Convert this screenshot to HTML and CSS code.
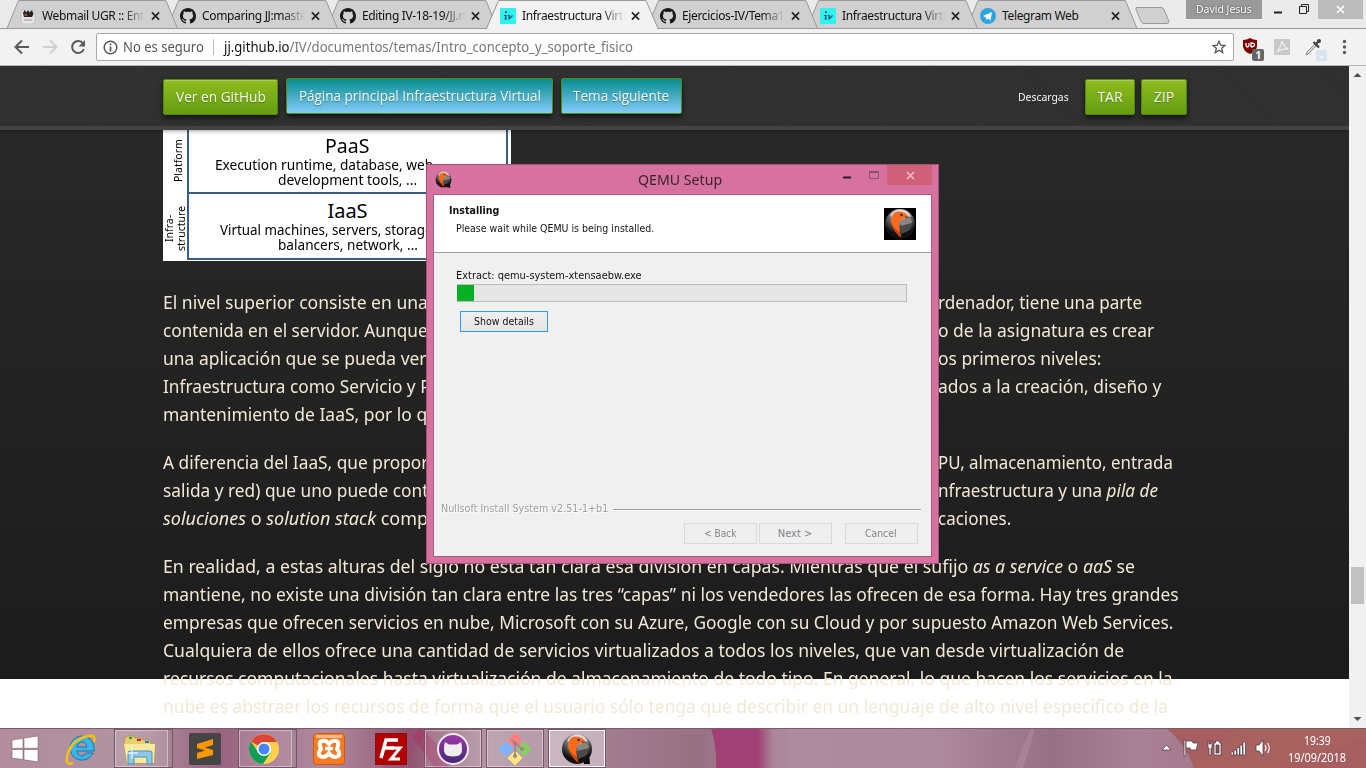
FILE: index.html
```html
<!DOCTYPE html>
<html lang="es">
<head>
<meta charset="utf-8">
<title>Infraestructura Virtual</title>
<link rel="stylesheet" href="styles.css">
</head>
<body>
<svg width="0" height="0" class="defs">
  <defs>
    <symbol id="octo" viewBox="0 0 16 16"><path d="M8 0C3.58 0 0 3.58 0 8c0 3.54 2.29 6.53 5.47 7.59.4.07.55-.17.55-.38 0-.19-.01-.82-.01-1.49-2.01.37-2.53-.49-2.69-.94-.09-.23-.48-.94-.82-1.13-.28-.15-.68-.52-.01-.53.63-.01 1.08.58 1.23.82.72 1.21 1.87.87 2.33.66.07-.52.28-.87.51-1.07-1.78-.2-3.64-.89-3.64-3.95 0-.87.31-1.59.82-2.15-.08-.2-.36-1.02.08-2.12 0 0 .67-.21 2.2.82.64-.18 1.32-.27 2-.27s1.36.09 2 .27c1.53-1.04 2.2-.82 2.2-.82.44 1.1.16 1.92.08 2.12.51.56.82 1.27.82 2.15 0 3.07-1.87 3.75-3.65 3.95.29.25.54.73.54 1.48 0 1.07-.01 1.93-.01 2.2 0 .21.15.46.55.38A8.01 8.01 0 0 0 16 8c0-4.42-3.58-8-8-8z" fill="#191717"/></symbol>
    <symbol id="iv" viewBox="0 0 16 16"><path d="M0 0h16v16H0z" fill="#2ff3f3"/><circle cx="6" cy="4.200" r="1" fill="#245"/><path d="M3.800 7.500H6L5.300 11l1.500-.3M7.800 7.300l1.200.2.200 3.300 3.300-3.300" fill="none" stroke="#245" stroke-width="1.200"/></symbol>
    <symbol id="close" viewBox="0 0 10 10"><path d="M1 1l8 8M9 1l-8 8" stroke="#222" stroke-width="1.800"/></symbol>
    <radialGradient id="ball" cx=".5" cy=".15" r=".8"><stop offset="0" stop-color="#ddd"/><stop offset=".5" stop-color="#666"/><stop offset=".85" stop-color="#111"/></radialGradient>
    <symbol id="qemu" viewBox="0 0 32 32"><path d="M22 21h6l1 10h-6z" fill="#050505"/><circle cx="16" cy="16" r="15" fill="url(#ball)"/><path d="M6 8Q9 2 16 1.500q8 0 11 7L20 9l-6 2z" fill="#e2e0de" opacity=".85"/><path d="M17 12l8-2.500q3 2 3 5.500l-11 4z" fill="#8b8580"/><path d="M16 18l12-3q0 5-4 8l-7 3z" fill="#4a4a4a"/><path d="M7 13Q7.500 4 14 3.500q5.500-.3 8 2.500l3 3-4 .5q-4 .5-5.500 4.500-1 4 .2 8l1.300 7.500Q8 22 7 13z" fill="#fb6a1b"/><path d="M8 16.500q3 9 9.500 13l-1-4.500Q12 22 8 16.500z" fill="#d24309"/><path d="M21 8l5 2-5-.3z" fill="#8a2f10"/><circle cx="17.500" cy="7" r="1.200" fill="#222"/></symbol>
  </defs>
</svg>

<header class="chrome">
  <div class="strip">
    <svg class="tabshapes" width="1366" height="29" viewBox="0 0 1366 29">
      <path d="M0 28.500h1366" stroke="#999"/>
      <g fill="#d0d0d0" stroke="#999">
        <path d="M966.500 28.500L978 .5h147.500l11.500 28z"/>
        <path d="M807 28.500L818.500.5H966l11.500 28z"/>
        <path d="M647 28.500L658.500.5H806l11.500 28z"/>
        <path d="M327 28.500L338.500.5H486l11.500 28z"/>
        <path d="M167 28.500L178.500.5H326l11.500 28z"/>
        <path d="M7 28.500L18.500.5H166l11.500 28z"/>
        <path d="M1137 7.500h24q2 0 3 2l5 12q0 2-2 2h-23q-2 0-3-2l-5-12q-.5-2 1-2z"/>
      </g>
      <path d="M486.500 29L498.500.5H646l12 28.500z" fill="#f2f2f2"/>
      <path d="M486.500 28.500L498.500.5H646l12 28" fill="none" stroke="#999"/>
    </svg>
    <div class="tab"><svg class="fav" viewBox="0 0 16 16"><path d="M1 5l2-4 3 3h4l3-3 2 4v9l-3 2H3l-2-2z" fill="#e8e4e2" stroke="#aaa" stroke-width=".5"/><path d="M3 5l1.500-3 2 2.500L8 2l1.500 2.500L12 2l1.500 4L12 9H4z" fill="#222"/><path d="M4 6h3v2H5z" fill="#b54c2a"/><path d="M4 12h8" stroke="#999"/></svg><span class="title">Webmail UGR :: Entrada</span><svg class="x"><use href="#close"/></svg></div>
    <div class="tab"><svg class="fav"><use href="#octo"/></svg><span class="title">Comparing JJ:master</span><svg class="x"><use href="#close"/></svg></div>
    <div class="tab"><svg class="fav"><use href="#octo"/></svg><span class="title">Editing IV-18-19/JJ.md</span><svg class="x"><use href="#close"/></svg></div>
    <div class="tab"><svg class="fav"><use href="#iv"/></svg><span class="title">Infraestructura Virtual</span><svg class="x"><use href="#close"/></svg></div>
    <div class="tab"><svg class="fav"><use href="#octo"/></svg><span class="title">Ejercicios-IV/Tema1</span><svg class="x"><use href="#close"/></svg></div>
    <div class="tab"><svg class="fav"><use href="#iv"/></svg><span class="title">Infraestructura Virtual</span><svg class="x"><use href="#close"/></svg></div>
    <div class="tab"><svg class="fav" viewBox="0 0 16 16"><circle cx="8" cy="8" r="8" fill="#2ca5e0"/><path d="M3 8l9-4-1.500 8.500L8 10.500 6.500 12 6 9.500z" fill="#fff"/></svg><span class="title full"><span data-w="77">Telegram Web</span></span><svg class="x"><use href="#close"/></svg></div>
    <div class="user"><span data-w="56">David Jesus</span></div>
    <svg class="winctl" width="104" height="19" viewBox="0 0 104 19"><path d="M56 0h45v19H56z" fill="#bcbcbc"/><path d="M12 12.500h8" stroke="#222" stroke-width="2"/><path d="M37.500 6.500h7v7h-7zM39.500 6V4.500h7v7H45" fill="none" stroke="#222"/><path d="M75 6l7 7M82 6l-7 7" stroke="#fff" stroke-width="1.600"/></svg>
  </div>
  <div class="toolbar">
    <svg width="96" height="36" viewBox="0 0 96 36" fill="none" stroke-width="2"><path d="M29 18H16M22 11.500L15.500 18l6.500 6.500" stroke="#5a5a5a"/><path d="M43 18h13M50 11.500l6.500 6.500-6.500 6.500" stroke="#d0d0d0"/><path d="M83 14.500a6 6 0 1 0 .8 5.500" stroke="#5a5a5a"/><path d="M85 11v6.500h-6.500z" fill="#5a5a5a"/></svg>
    <div class="omni">
      <svg width="15" height="15" viewBox="0 0 15 15"><circle cx="7.500" cy="7.500" r="6.300" fill="none" stroke="#555" stroke-width="1.500"/><path d="M7.500 6.500v5M7.500 3.500v1.700" stroke="#555" stroke-width="1.700"/></svg>
      <span class="sec"><span data-w="81">No es seguro</span></span>
      <span class="url"><span data-w="409">jj.github.io<span class="path">/IV/documentos/temas/Intro_concepto_y_soporte_fisico</span></span></span>
      <svg class="star" width="14" height="14" viewBox="0 0 14 14"><path d="M7 1.200l1.700 4 4.200.3-3.200 2.800 1 4.200L7 10.200l-3.700 2.300 1-4.200L1.100 5.500l4.200-.3z" fill="none" stroke="#555" stroke-width="1.300"/></svg>
    </div>
    <svg width="132" height="36" viewBox="0 0 132 36"><path d="M9 11q4 0 7-2 3 2 7 2v6q0 5-7 8-7-3-7-8z" fill="#800000"/><path d="M12 14v2q0 2 1.500 2t1.500-2v-2M17 18v-4q4 0 3.500 2t-3.500 2" fill="none" stroke="#fff" stroke-width="1.300"/><rect x="18" y="20" width="12" height="12" rx="2" fill="#666"/><text x="21.500" y="30" font-size="10" font-weight="700" fill="#fff" font-family="Noto Sans">1</text><path d="M40 10h16v16H40z" fill="#c8c8c8"/><path d="M43 23q4-5 5-11 1 5 6 8-6-1-11 3z" fill="none" stroke="#eee" stroke-width="1.300"/><path d="M82 17l-8 8-2 1 1-3 8-8z" fill="#ddd" stroke="#888"/><path d="M79.500 13l5.500 5.500M81.500 15.500l4-4" stroke="#444" stroke-width="2.400"/><circle cx="85" cy="12" r="2" fill="#444"/><rect x="82" y="21" width="11" height="11" rx="2" fill="#d7e5ee"/><path d="M86 28h3" stroke="#fff"/><g fill="#5a5a5a"><circle cx="110.500" cy="12.500" r="1.700"/><circle cx="110.500" cy="18" r="1.700"/><circle cx="110.500" cy="23.500" r="1.700"/></g></svg>
  </div>
</header>

<main class="view">
  <div class="page">
    <nav class="bar">
      <a class="btn"><span data-w="90">Ver en GitHub</span></a>
      <a class="btn blue b1"><span data-w="242">Página principal Infraestructura Virtual</span></a>
      <a class="btn blue b2"><span data-w="96">Tema siguiente</span></a>
      <span class="dl"><span data-w="51">Descargas</span></span>
      <a class="btn tar"><span data-w="25">TAR</span></a>
      <a class="btn zip"><span data-w="20">ZIP</span></a>
    </nav>
    <article class="content">
      <div class="diagram">
        <div class="side s1">Platform</div>
        <div class="cell c1"><h4><span data-w="45">PaaS</span></h4><p class="long"><span data-w="218">Execution runtime, database, web</span></p><p><span data-w="139">development tools, ...</span></p></div>
        <div class="side s2">Infra-<br>structure</div>
        <div class="cell c2"><h4><span data-w="40">IaaS</span></h4><p class="long"><span data-w="213">Virtual machines, servers, storage</span></p><p><span data-w="140">balancers, network, ...</span></p></div>
      </div>
      <div class="para">
        <div class="line"><span class="l"><span data-w="265">El nivel superior consiste en una</span></span><span data-w="204">rdenador, tiene una parte</span></div>
        <div class="line"><span class="l"><span data-w="265">contenida en el servidor. Aunque</span></span><span data-w="216">o de la asignatura es crear</span></div>
        <div class="line"><span class="l"><span data-w="264">una aplicación que se pueda ver</span></span><span data-w="163">os primeros niveles:</span></div>
        <div class="line"><span class="l"><span data-w="268">Infraestructura como Servicio y P</span></span><span data-w="223">ados a la creación, diseño y</span></div>
        <div class="line"><span class="l"><span data-w="264">mantenimiento de IaaS, por lo q</span></span></div>
      </div>
      <div class="para">
        <div class="line"><span class="l"><span data-w="265">A diferencia del IaaS, que propor</span></span><span data-w="235">PU, almacenamiento, entrada</span></div>
        <div class="line"><span class="l"><span data-w="265">salida y red) que uno puede cont</span></span><span data-w="220">nfraestructura y una <i>pila de</i></span></div>
        <div class="line"><span class="l"><span data-w="265"><i>soluciones</i> o <i>solution stack</i> comp</span></span><span data-w="73">caciones.</span></div>
      </div>
      <div class="para">
        <div class="line"><span data-w="972">En realidad, a estas alturas del siglo no está tan clara esa división en capas. Mientras que el sufijo <i>as a service</i> o <i>aaS</i> se</span></div>
        <div class="line"><span data-w="1016">mantiene, no existe una división tan clara entre las tres “capas” ni los vendedores las ofrecen de esa forma. Hay tres grandes</span></div>
        <div class="line"><span data-w="1010">empresas que ofrecen servicios en nube, Microsoft con su Azure, Google con su Cloud y por supuesto Amazon Web Services.</span></div>
        <div class="line"><span data-w="961">Cualquiera de ellos ofrece una cantidad de servicios virtualizados a todos los niveles, que van desde virtualización de</span></div>
        <div class="line"><span data-w="1010">recursos computacionales hasta virtualización de almacenamiento de todo tipo. En general, lo que hacen los servicios en la</span></div>
        <div class="line"><span data-w="1005">nube es abstraer los recursos de forma que el usuario sólo tenga que describir en un lenguaje de alto nivel específico de la</span></div>
      </div>
    </article>
  </div>
  <div class="scroll"><svg width="17" height="17"><path d="M4.500 11l4-4 4 4z" fill="#505050"/></svg><div class="thumb"></div><svg class="down" width="17" height="17"><path d="M4.500 6l4 4 4-4z" fill="#505050"/></svg></div>
</main>

<section class="dialog">
  <div class="dtitle"><svg width="17" height="17"><use href="#qemu"/></svg><span class="dname"><span data-w="84">QEMU Setup</span></span>
    <svg class="dctl" width="94" height="22" viewBox="0 0 94 22"><path d="M49 0h45v20H49z" fill="#cf6079"/><path d="M5 12.500h8" stroke="#222" stroke-width="2"/><path d="M31.500 6.500h9v7h-9z" fill="none" stroke="#8e5169"/><path d="M31 7h10" stroke="#8e5169" stroke-width="2"/><path d="M69 7l7 7M76 7l-7 7" stroke="#f0bdcb" stroke-width="1.600"/></svg>
  </div>
  <div class="dbody">
    <div class="dhead"><div><b><span data-w="50">Installing</span></b><p><span data-w="198">Please wait while QEMU is being installed.</span></p></div><div class="logo"><svg width="32" height="32"><use href="#qemu"/></svg></div></div>
    <div class="dmain">
      <span class="ext"><span data-w="186">Extract: qemu-system-xtensaebw.exe</span></span>
      <div class="prog"><div></div></div>
      <button class="show"><span data-w="60">Show details</span></button>
      <div class="nsis"><span data-w="167">Nullsoft Install System v2.51-1+b1</span><hr></div>
      <div class="btns"><button><span data-w="32">&lt; Back</span></button><button><span data-w="34">Next &gt;</span></button><button class="cancel"><span data-w="32">Cancel</span></button></div>
    </div>
  </div>
</section>

<footer class="task">
  <svg class="taskbg" width="1366" height="40" viewBox="0 0 1366 40" preserveAspectRatio="none">
    <defs><linearGradient id="tb"><stop offset="0" stop-color="#b38d9c"/><stop offset=".1" stop-color="#b093a0"/><stop offset=".16" stop-color="#98637f"/><stop offset=".24" stop-color="#af8ba0"/><stop offset=".3" stop-color="#925571"/><stop offset=".36" stop-color="#b499a8"/><stop offset=".45" stop-color="#a17c8e"/><stop offset=".51" stop-color="#987083"/><stop offset=".58" stop-color="#ae8b9f"/><stop offset=".69" stop-color="#ae899c"/><stop offset=".77" stop-color="#967083"/><stop offset=".83" stop-color="#a98195"/><stop offset=".86" stop-color="#a77c91"/></linearGradient>
    <linearGradient id="mg"><stop offset="0" stop-color="#a14075"/><stop offset=".75" stop-color="#a14075"/><stop offset="1" stop-color="#a14075" stop-opacity="0"/></linearGradient></defs>
    <path d="M0 0h1366v40H0z" fill="url(#tb)"/><path d="M382 40L408 0h20l-25 40z" fill="#9d4571" opacity=".4"/><path d="M420 0q20 15 30 40h-15L412 8z" fill="#a32763" opacity=".4"/>
    <path d="M711 0h62v40h-57q1-20-5-40z" fill="url(#mg)"/><path d="M1031 0q-9 20-16 40h8q7-20 12-40z" fill="#c09bad" opacity=".35"/><path d="M1166 0q20 16 28 40h172V0z" fill="#a65e60"/><path d="M1240 0l-50 40h90l86-30V0z" fill="#aa675e" opacity=".4"/><path d="M0 .5h1366" stroke="#7c596a"/>
  </svg>
  <div class="slot start"><svg width="28" height="28" viewBox="0 0 28 28"><path d="M1 5l11-1.700v10H1zM13 3.100L27 1v12.300H13zM1 14.500h11v10L1 23zM13 14.500h14V27l-14-2.200z" fill="#fff" stroke="#806070" stroke-width=".6"/></svg></div>
  <div class="slot"><svg width="32" height="32" viewBox="0 0 32 32"><path d="M28 20a12 12 0 1 1 1-6l.3 4H12q1 5 5 5 3 0 4-3z" fill="#3bb4ea" stroke="#1677a8"/><path d="M12 14h10q-1-5-5-5t-5 5z" fill="#b493a0" stroke="#1677a8"/><path d="M29 9q2-8-6-6Q8 6 3 20-1 33 8 30" fill="none" stroke="#f5bf19" stroke-width="2.600"/></svg></div>
  <div class="slot open multi"><svg width="34" height="32" viewBox="0 0 34 32"><path d="M2 5l2-2h6l2 2h6l2 2h6l2 2v3l4 1-1 17H4L1 10z" fill="#e9cf71" stroke="#b8963c"/><path d="M1 11h31l-1 19H4z" fill="#f7e99d"/><path d="M6 5h3" stroke="#1fa032" stroke-width="2"/><path d="M14 7h4" stroke="#d22" stroke-width="2"/><path d="M22 9h4" stroke="#27e" stroke-width="2"/><path d="M5 31V20q0-2 2-2h20q2 0 2 2v11h-5v-7H11v7z" fill="#8cc8e8" stroke="#4d93bb"/><path d="M9 14v12M3 20h12" stroke="#fff"/></svg></div>
  <div class="slot"><svg width="32" height="32" viewBox="0 0 32 32"><rect width="32" height="32" rx="2" fill="#454545"/><path d="M8 11l16-5v6l-8 2.600 8 2.400v5L8 26v-6l8-2.400L8 15z" fill="#ff9800"/></svg></div>
  <div class="slot open multi"><svg width="30" height="30" viewBox="0 0 30 30"><circle cx="15" cy="15" r="15" fill="#ffd04b"/><path d="M15 15L2 7.500A15 15 0 0 1 28 8H15z" fill="#db4437"/><path d="M2 7.500A15 15 0 0 0 14 30l7.500-11.500L9 18z" fill="#109d58"/><circle cx="15" cy="15" r="7" fill="#fff"/><circle cx="15" cy="15" r="5.500" fill="#4285f4"/></svg></div>
  <div class="slot"><svg width="32" height="32" viewBox="0 0 32 32"><rect x=".5" y=".5" width="31" height="31" rx="3" fill="#f57c22" stroke="#cf590c"/><path d="M3 2h26v3H3z" fill="#fbb98a"/><path d="M16 11q-3-4-7-3t-1 8q-4 5-1 7 5 3 9-3 4 6 9 3 3-2-1-7 3-7-1-8t-7 3z" fill="none" stroke="#fff" stroke-width="4"/><path d="M12 15.500h8" stroke="#fff" stroke-width="3.500"/></svg></div>
  <div class="slot"><svg width="32" height="32" viewBox="0 0 32 32"><rect x=".5" y=".5" width="31" height="31" fill="#b30000" stroke="#700" stroke-dasharray="2 1"/><path d="M6 25L11 7h12M8 15h11" fill="none" stroke="#fff" stroke-width="3.500"/><path d="M16 15h9L16 26h9" fill="none" stroke="#fff" stroke-width="3"/></svg></div>
  <div class="slot open"><svg width="32" height="32" viewBox="0 0 32 32"><defs><linearGradient id="gd" x2="0" y2="1"><stop stop-color="#a13aa9"/><stop offset="1" stop-color="#422777"/></linearGradient></defs><circle cx="16" cy="16" r="15" fill="url(#gd)" stroke="#eee" stroke-width="2"/><path d="M8 9l4 2.500h8L24 9q1 3 1 6.500 1 8-9 8t-9-8Q7 12 8 9z" fill="#eee"/></svg></div>
  <div class="slot open"><svg width="34" height="34" viewBox="0 0 34 34"><path d="M17 1l7 7-7 7-7-7z" fill="#ff8080" stroke="#ff8080"/><path d="M26 10l7 7-7 7-7-7z" fill="#87cf65" stroke="#87cf65"/><path d="M8 10l7 7-7 7-7-7z" fill="#80b3ff" stroke="#80b3ff"/><path d="M17 19l7 7-7 7-7-7z" fill="#ffe680" stroke="#ffe680"/><path d="M13 7l4 4v13M17 11l7 6" stroke="#a17f8b" stroke-width="1.500" fill="none"/><g fill="#a17f8b"><circle cx="17" cy="11" r="2"/><circle cx="24" cy="17" r="2"/><circle cx="17" cy="24" r="2"/></g></svg></div>
  <div class="slot open active"><svg width="32" height="32"><use href="#qemu"/></svg></div>
  <svg class="tray" width="122" height="24" viewBox="0 0 122 24"><g fill="#fff" stroke="#59404a" stroke-width=".8"><path d="M4 14l4.500-5 4.500 5z"/><path d="M26 4h1.800v16H26z"/><path d="M28 5h6l1 2h5l-2 7h-5l-1-2h-4z"/><path d="M56 7h1.500V5h4v2H63v12h-7z"/><path d="M58 9h3v8h-3z" fill="#7d5263"/><path d="M50 5h1v3h2V5h1v7h-1v7h-2v-7h-1z"/><path d="M73 16h2.500v3H73zM76 14h2.500v5H76zM79 11.500h2.500V19H79zM82 9h2.500v10H82zM85 6h2.500v13H85z"/><path d="M98 9h3l4-5v16l-4-5h-3z"/></g><path d="M107 9q2 3 0 6M109.500 7q3.500 5 0 10" fill="none" stroke="#fff" stroke-width="1.100"/></svg>
  <div class="clock"><span data-w="27">19:39</span><span data-w="58">19/09/2018</span></div>
</footer>
<script src="fit.js"></script>
</body>
</html>
```

FILE: styles.css
```css
* { box-sizing: border-box; }
html, body { margin: 0; overflow: hidden; }
body { width: 1366px; height: 768px; display: flex; flex-direction: column; background: #fff; font-family: "Noto Sans", "Open Sans", sans-serif; position: relative; }
.defs { position: absolute; }
[data-w] { display: inline-block; white-space: nowrap; transform-origin: 0 50%; flex: none; }
p, h4 { margin: 0; }

.chrome { height: 66px; flex: none; background: #f2f2f2; border-bottom: 1px solid #b6b4b6; }
.strip { height: 29px; display: flex; position: relative; background: #eaeaea; }
.tabshapes { position: absolute; left: 0; top: 0; }
.tab { width: 160px; flex: none; position: relative; display: flex; align-items: center; padding: 2px 0 0 20px; }
.fav { width: 16px; height: 16px; flex: none; margin-right: 6px; }
.title { width: 103px; flex: none; overflow: hidden; white-space: nowrap; font-size: 12px; line-height: 20px; letter-spacing: -.35px; color: #111; -webkit-mask-image: linear-gradient(90deg, #000 78%, transparent); }
.title.full { -webkit-mask-image: none; }
.x { width: 10px; height: 10px; margin-left: 6px; }
.user { margin-left: 66px; width: 76px; height: 19px; padding-left: 10px; background: #9a9a9a; color: #fff; font-size: 11px; line-height: 18px; text-shadow: 0 0 2px #333; flex: none; position: relative; }
.winctl { flex: none; position: relative; }
.toolbar { height: 36px; display: flex; }
.toolbar > svg { flex: none; }
.omni { width: 1138px; height: 28px; margin-top: 4px; flex: none; background: #fff; border: 1px solid #a9a9a9; border-radius: 2px; display: flex; align-items: center; padding: 0 7px 0 6px; font-size: 14px; line-height: 20px; }
.sec { width: 91px; margin-left: 5px; color: #555; border-right: 1px solid #bbb; height: 16px; display: flex; align-items: center; }
.url { margin-left: 10px; color: #111; }
.path { color: #777; }
.star { margin-left: auto; }

.view { height: 662px; flex: none; display: flex; overflow: hidden; }
.page { width: 1349px; overflow: hidden; background: linear-gradient(#2a2a29, #1c1c1c 613px, #fff 613px); }
.bar { height: 64px; border-bottom: 4px solid #434343; background: repeating-linear-gradient(45deg, #353535 0 1.4px, #2c2c2c 1.4px 2.8px); padding: 13px 0 0 163px; display: flex; align-items: flex-start; box-shadow: 0 1px 4px rgba(0,0,0,.4); position: relative; }
.btn { height: 36px; width: 115px; flex: none; border: 1px solid #538b0c; border-radius: 2px; display: flex; justify-content: center; align-items: center; color: #f5faef; font: 400 14px/20px "Open Sans", sans-serif; background: linear-gradient(#8fbc20, #649d10); box-shadow: inset 0 1px 0 #a9cf4d, 0 3px 5px rgba(0,0,0,.6); text-shadow: 0 1px 1px rgba(0,0,0,.3); }
.blue { background: linear-gradient(#078d90, #83cbf8); box-shadow: 0 3px 5px rgba(0,0,0,.6); margin-top: -1px; margin-left: 8px; }
.b1 { width: 267px; }
.b2 { width: 121px; }
.dl { width: 51px; margin-left: 336px; font-size: 11px; color: #f4f4f4; line-height: 36px; }
.tar { width: 50px; margin-left: 16px; }
.zip { width: 46px; margin-left: 6px; }
.content { width: 1024px; margin-left: 163px; color: #f2e8d5; }
.diagram { width: 348px; height: 131px; background: #fff; color: #000; display: grid; grid-template-columns: 24px 321px; grid-template-rows: 64px 66px; }
.cell { border: 2px solid #385d8a; border-top: 0; text-align: center; white-space: nowrap; overflow: hidden; }
.cell h4 { font-weight: 400; font-size: 20px; line-height: 24px; }
.c1 { padding-top: 4px; }
.c2 { padding-top: 5px; }
.cell p { font-size: 13.5px; line-height: 15px; }
.c1 .long { padding-left: 26px; text-align: left; }
.c2 .long { padding-left: 31px; text-align: left; }
.side { writing-mode: vertical-rl; transform: rotate(180deg); font-size: 10.5px; line-height: 12px; text-align: center; }
.s1 { padding-right: 9px; padding-top: 12px; text-align: start; }
.s2 { padding-bottom: 3px; }
.para { margin: 27px 0 20px; font-size: 18.6px; }
.para + .para { margin: 20px 0; }
.line { height: 28px; line-height: 28px; display: flex; white-space: nowrap; }
.l { width: 775px; flex: none; }
.scroll { width: 17px; background: #f1f1f1; display: flex; flex-direction: column; }
.thumb { width: 13px; height: 37px; margin: 484px 0 0 2px; background: #c1c1c1; }
.down { margin-top: auto; }

.dialog { position: absolute; left: 426px; top: 164px; width: 513px; height: 400px; background: #d7719f; border: 1px solid #a55179; padding: 0 6px 6px; font: 11px/14px "DejaVu Sans Condensed", "DejaVu Sans", sans-serif; font-stretch: condensed; color: #111; }
.dtitle { height: 29px; display: flex; align-items: flex-start; font: 15px/28px "Noto Sans", sans-serif; color: #3b2430; }
.dtitle > svg:first-child { margin: 6px 0 0 2px; }
.dname { margin-left: 186px; }
.dctl { margin-left: auto; }
.dbody { height: 363px; border: 1px solid #ab5a80; background: #f0f0f0; }
.dhead { height: 58px; background: #fff; border-bottom: 1px solid #a0a0a0; display: flex; justify-content: space-between; padding: 8px 15px 0 15px; }
.dhead p { margin: 4px 0 0 7px; }
.dhead b { display: block; margin-top: 1px; }
.logo { width: 32px; height: 32px; margin-top: 5px; background: #000; }
.dmain { padding: 16px 10px 0 23px; display: flex; flex-direction: column; }
.ext { line-height: 14px; margin-left: -1px; }
.prog { height: 18px; width: 450px; margin-top: 1px; background: #e6e6e6; border: 1px solid #bcbcbc; border-left: 0; }
.prog div { width: 17px; height: 16px; background: #06b025; }
.dialog button { font: inherit; padding: 1px 1px 0 0; height: 21px; width: 73px; background: #efefef; border: 1px solid #d9d9d9; color: #838383; display: flex; align-items: center; justify-content: center; }
.dialog .show { width: 88px; margin: 9px 0 0 3px; border-color: #3399ff; background: linear-gradient(#f0f0f0, #e5e5e5); color: #111; }
.nsis { display: flex; align-items: center; margin: 170px 0 0 -16px; color: #a0a0a0; text-shadow: 1px 1px #fff; }
.nsis hr { height: 2px; border: 0; border-top: 1px solid #a0a0a0; background: #fff; margin: 1px 0 0 5px; flex: 1; }
.btns { display: flex; gap: 2px; justify-content: flex-end; padding: 7px 3px 0 0; }
.dialog .cancel { margin-left: 11px; }

.task { height: 40px; flex: none; display: flex; position: relative; gap: 4px; overflow: hidden; }
.taskbg { position: absolute; left: 0; top: 0; }
.slot { width: 58px; height: 39px; margin-top: 1px; flex: none; display: flex; align-items: center; justify-content: center; position: relative; border: 1px solid transparent; }
.start { width: 48px; padding-left: 2px; }
.open { border-color: #795366; box-shadow: inset 0 0 0 1px rgba(255,255,255,.4); background: rgba(255,255,255,.12); }
.multi { border-right-width: 5px; border-right-color: #a48593; width: 59px; margin-right: -1px; outline: 1px solid #795366; outline-offset: -1px; }
.multi svg { margin-left: -4px; }
.active { background: rgba(255,255,255,.38); box-shadow: inset 0 0 0 1px #fff; }
.tray { position: relative; margin: 8px 0 0 548px; flex: none; }
.clock { position: relative; width: 60px; margin-left: 4px; display: flex; flex-direction: column; align-items: center; color: #fff; font-size: 12px; line-height: 17px; padding-top: 4px; }
.clock span { align-self: flex-start; }
.clock span:first-child { margin-left: 16px; }
```

FILE: fit.js
```js
// Scales each label horizontally to its nominal column width.
document.querySelectorAll('[data-w]').forEach(function (el) {
  var natural = el.offsetWidth;
  var target = parseFloat(el.dataset.w);
  el.style.transform = 'scaleX(' + target / natural + ')';
  el.style.marginRight = (target - natural) + 'px';
});
```
